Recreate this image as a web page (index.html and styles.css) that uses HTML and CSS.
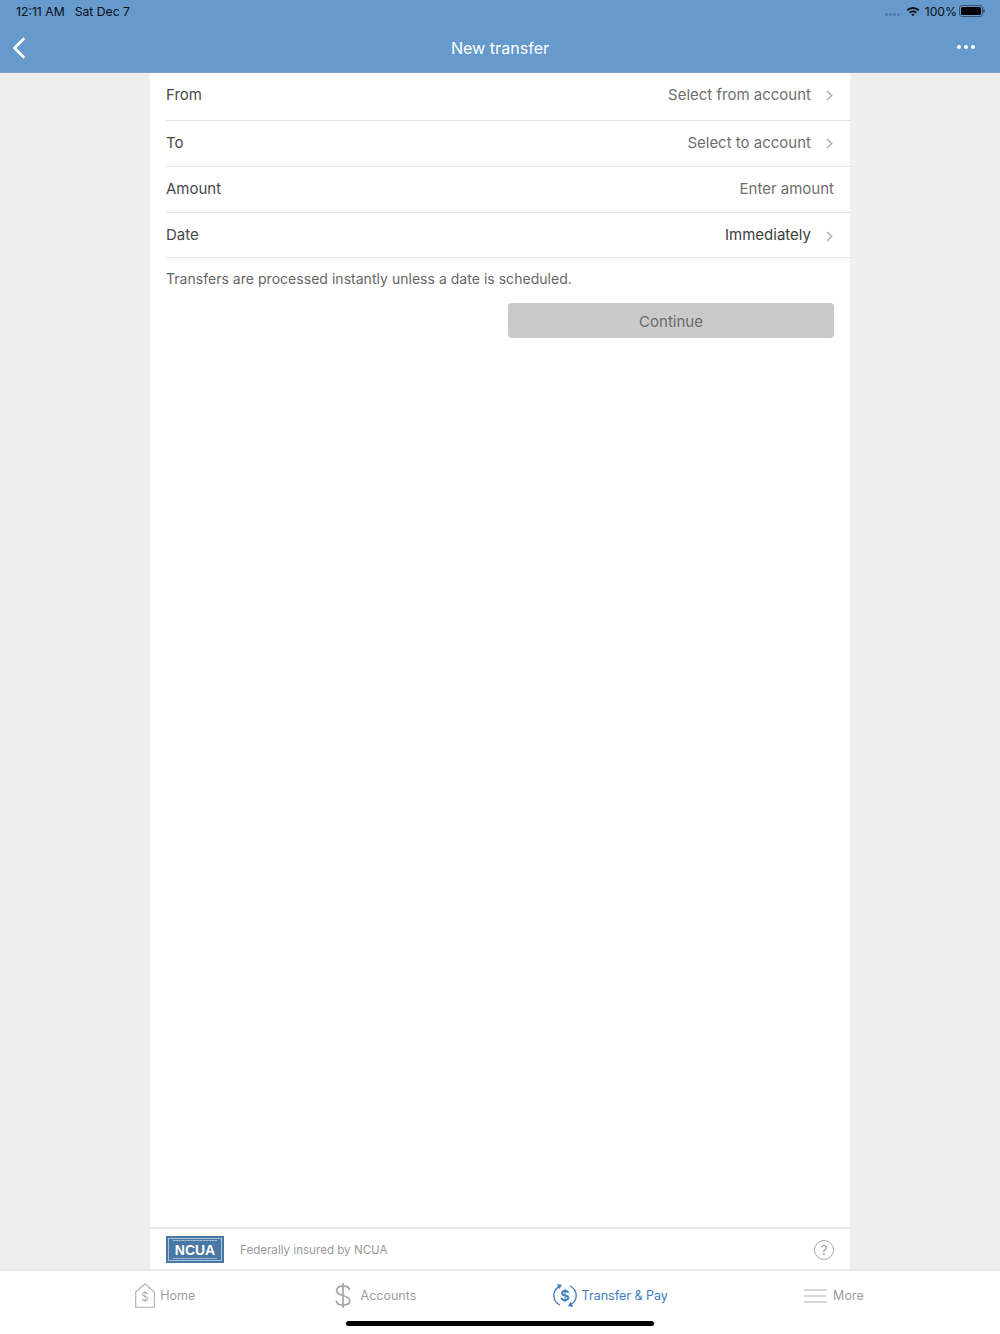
FILE: index.html
```html
<!DOCTYPE html>
<html lang="en">
<head>
    <meta charset="UTF-8">
    <title>New transfer</title>
    <link rel="stylesheet" href="styles.css">
</head>
<body>
    <div class="top">
        <div class="status">
            <div class="status-time"><span>12:11 AM</span><span>Sat Dec 7</span></div>
            <div class="status-right">
                <span class="signal"><i></i><i></i><i></i><i></i></span>
                <svg class="wifi" width="14" height="11" viewBox="0 0 14 11">
                    <path d="M0.6 3.6A9.2 9.2 0 0 1 13.4 3.6L12 5A7.2 7.2 0 0 0 2 5Z" fill="#0b0f14"/>
                    <path d="M3 6A5.8 5.8 0 0 1 11 6L9.6 7.4A3.8 3.8 0 0 0 4.4 7.4Z" fill="#0b0f14"/>
                    <path d="M5.4 8.4A2.4 2.4 0 0 1 8.6 8.4L7 10.2Z" fill="#0b0f14"/>
                </svg>
                <span class="percent">100%</span>
                <span class="battery"><b></b></span>
                <span class="battery-nub"></span>
            </div>
        </div>
        <div class="nav">
            <svg class="back" width="14" height="22" viewBox="0 0 14 22">
                <path d="M11.5 2L2.5 11L11.5 20" fill="none" stroke="#fff" stroke-width="2.6" stroke-linecap="round" stroke-linejoin="round"/>
            </svg>
            <div class="nav-title">New transfer</div>
            <div class="dots"><i></i><i></i><i></i></div>
        </div>
    </div>

    <div class="main">
        <div class="panel">
            <div class="row row-first">
                <span class="label">From</span>
                <span class="value">Select from account</span>
                <svg class="chev" width="7" height="11" viewBox="0 0 7 11"><path d="M1 1L5.6 5.5L1 10" fill="none" stroke="#b5b5b5" stroke-width="1.7"/></svg>
            </div>
            <div class="row">
                <span class="label">To</span>
                <span class="value">Select to account</span>
                <svg class="chev" width="7" height="11" viewBox="0 0 7 11"><path d="M1 1L5.6 5.5L1 10" fill="none" stroke="#b5b5b5" stroke-width="1.7"/></svg>
            </div>
            <div class="row">
                <span class="label">Amount</span>
                <span class="value">Enter amount</span>
            </div>
            <div class="row row-last">
                <span class="label">Date</span>
                <span class="value value-dark">Immediately</span>
                <svg class="chev" width="7" height="11" viewBox="0 0 7 11"><path d="M1 1L5.6 5.5L1 10" fill="none" stroke="#b5b5b5" stroke-width="1.7"/></svg>
            </div>
            <p class="note">Transfers are processed instantly unless a date is scheduled.</p>
            <div class="actions"><button class="continue" type="button">Continue</button></div>
            <div class="insured">
                <div class="ncua">
                    <div class="ncua-inner">
                        <div class="ncua-fine"></div>
                        <div class="ncua-name">NCUA</div>
                        <div class="ncua-fine ncua-fine-low"></div>
                    </div>
                </div>
                <span class="insured-text">Federally insured by NCUA</span>
                <span class="help">?</span>
            </div>
        </div>
    </div>

    <div class="tabs">
        <div class="tab tab-home">
            <svg width="20" height="25" viewBox="0 0 20 25">
                <path d="M0.7 9L10 0.8L19.3 9V24.2H0.7Z" fill="none" stroke="#b0b0b0" stroke-width="1.1"/>
                <text x="10" y="18" text-anchor="middle" class="tab-svg-text">$</text>
            </svg>
            <span>Home</span>
        </div>
        <div class="tab tab-wide">
            <svg width="16" height="25" viewBox="0 0 16 25">
                <path d="M14.6 7.2C14.2 4.4 11.6 3 8 3C4.2 3 1.6 4.8 1.6 7.5C1.6 10.4 4.4 11.5 8 12.5C11.8 13.6 14.8 14.8 14.8 17.7C14.8 20.5 12 22 8 22C4.2 22 1.6 20.5 1.2 17.6M8 0V25" fill="none" stroke="#a8a8a8" stroke-width="1.8"/>
            </svg>
            <span>Accounts</span>
        </div>
        <div class="tab tab-on">
            <svg width="24" height="25" viewBox="0 0 24 25">
                <path d="M6 3.6C2.8 5.6 0.8 8.6 0.8 12.2C0.8 16.4 3 20 7 22" fill="none" stroke="#3d7cc0" stroke-width="1.3"/>
                <path d="M18 21.4C21.2 19.4 23.2 16.4 23.2 12.8C23.2 8.6 21 5 17 3" fill="none" stroke="#3d7cc0" stroke-width="1.3"/>
                <path d="M3.8 1.2L9 1.8L6.4 6.2Z" fill="#3d7cc0"/>
                <path d="M20.2 23.8L15 23.2L17.6 18.8Z" fill="#3d7cc0"/>
                <text x="12" y="17.5" text-anchor="middle" class="tab-svg-money">$</text>
            </svg>
            <span>Transfer &amp; Pay</span>
        </div>
        <div class="tab">
            <svg width="23" height="14" viewBox="0 0 23 14">
                <path d="M0 1H23M0 7H23M0 13H23" stroke="#b0b0b0" stroke-width="1.2"/>
            </svg>
            <span>More</span>
        </div>
        <div class="home-bar"></div>
    </div>
</body>
</html>
```

FILE: styles.css
```css
*{padding: 0;margin: 0;box-sizing: border-box;}
body{
    width: 1000px;
    height: 1334px;
    display: flex;
    flex-direction: column;
    overflow: hidden;
    background: #eeeeee;
    font-family: Inter, "Noto Sans", sans-serif;
    color: #4a4a4a;
}

.top{
    background: #6699cc;
    border-bottom: 1px solid #7f9fc4;
    height: 73px;
}
.status{
    height: 24px;
    padding: 0 15px 2px 16px;
    display: flex;
    justify-content: space-between;
    align-items: center;
    font-size: 12.2px;
    color: #0b0f14;
}
.status-time{display: flex;gap: 10px;}
.status-right{display: flex;align-items: center;}
.signal{display: flex;gap: 1px;margin-right: 6px;margin-top: 6px;}
.signal i{width: 3px;height: 3px;border-radius: 50%;background: #4f7aa6;}
.wifi{margin-right: 5px;}
.percent{margin-right: 2px;}
.battery{
    width: 24px;
    height: 12px;
    border: 1px solid #34557a;
    border-radius: 3px;
    padding: 1px;
    display: block;
}
.battery b{display: block;height: 100%;background: #000;border-radius: 1.5px;}
.battery-nub{
    width: 2px;
    height: 4px;
    background: #34557a;
    border-radius: 0 2px 2px 0;
}

.nav{
    height: 48px;
    padding: 0 25px 0 12px;
    display: flex;
    align-items: center;
    justify-content: space-between;
    position: relative;
}
.nav-title{
    position: absolute;
    left: 0;
    right: 0;
    text-align: center;
    color: #fff;
    font-size: 16.1px;
}
.dots{display: flex;gap: 3px;margin-bottom: 2px;}
.dots i{width: 4px;height: 4px;border-radius: 50%;background: #fff;}

.main{
    flex: 1;
    display: flex;
    justify-content: center;
    min-height: 0;
}
.panel{
    width: 700px;
    background: #fff;
    display: flex;
    flex-direction: column;
}
.row{
    height: 46px;
    margin-left: 16px;
    padding: 0 16px 3px 0;
    border-bottom: 1px solid #e4e4e4;
    display: flex;
    align-items: center;
    justify-content: space-between;
    font-size: 15px;
}
.row-first{height: 48px;padding-bottom: 5px;}
.row-last{height: 45px;padding-bottom: 1px;}
.label{flex: 1;color: #4a4a4a;}
.value{color: #6f6f6f;}
.value-dark{color: #3c3c3c;}
.chev{margin-left: 15px;margin-right: 1px;margin-top: 3px;}

.note{
    margin: 13px 16px 0;
    font-size: 14px;
    line-height: 16px;
    letter-spacing: 0.03px;
    color: #666;
}
.actions{
    display: flex;
    justify-content: flex-end;
    padding: 16px 16px 0;
}
.continue{
    width: 326px;
    height: 35px;
    padding-top: 2px;
    border: 0;
    border-radius: 4px;
    background: #cacaca;
    color: #6b6b6b;
    font-family: inherit;
    font-size: 15px;
}

.insured{
    margin-top: auto;
    height: 42px;
    padding: 0 16px;
    border-top: 2px solid #e8e8e8;
    display: flex;
    align-items: center;
}
.ncua{
    width: 58px;
    height: 27px;
    padding: 2px;
    background: #4a78a4;
    margin-right: 16px;
}
.ncua-inner{
    height: 100%;
    border: 1px solid #a9c0d6;
    display: flex;
    flex-direction: column;
    justify-content: space-between;
    align-items: center;
}
.ncua-fine{
    width: 44px;
    height: 1px;
    margin-top: 1px;
    background: repeating-linear-gradient(90deg, #a9c0d6 0 2px, #7f9fc0 2px 3px);
}
.ncua-fine-low{margin: 0 0 1px;}
.ncua-name{
    color: #fff;
    font-family: "Liberation Sans", sans-serif;
    font-weight: bold;
    font-size: 14px;
    line-height: 14px;
    margin-top: 1px;
}
.insured-text{flex: 1;font-size: 11.6px;color: #999;padding-top: 2px;}
.help{
    width: 20px;
    height: 20px;
    margin-top: 1px;
    border: 1px solid #aaa;
    border-radius: 50%;
    color: #999;
    font-size: 13px;
    line-height: 18px;
    text-align: center;
}

.tabs{
    height: 65px;
    background: #fff;
    border-top: 2px solid #e8e8e8;
    padding-bottom: 14px;
    display: flex;
    align-items: center;
    justify-content: space-evenly;
    position: relative;
}
.tab{
    display: flex;
    align-items: center;
    gap: 6px;
    font-size: 12.5px;
    color: #a0a0a0;
}
.tab-home{gap: 5px;margin-right: 3px;margin-left: -1px;}
.tab-wide{gap: 10px;}
.tab-on{gap: 5px;color: #3d7cc0;}
.tab-svg-text{font-size: 12px;font-weight: 300;fill: #a0a0a0;font-family: Inter, sans-serif;}
.tab-svg-money{font-size: 15px;font-weight: 600;fill: #3d7cc0;font-family: Inter, sans-serif;}
.home-bar{
    position: absolute;
    left: 346px;
    bottom: 8px;
    width: 308px;
    height: 5px;
    border-radius: 3px;
    background: #000;
}
```
